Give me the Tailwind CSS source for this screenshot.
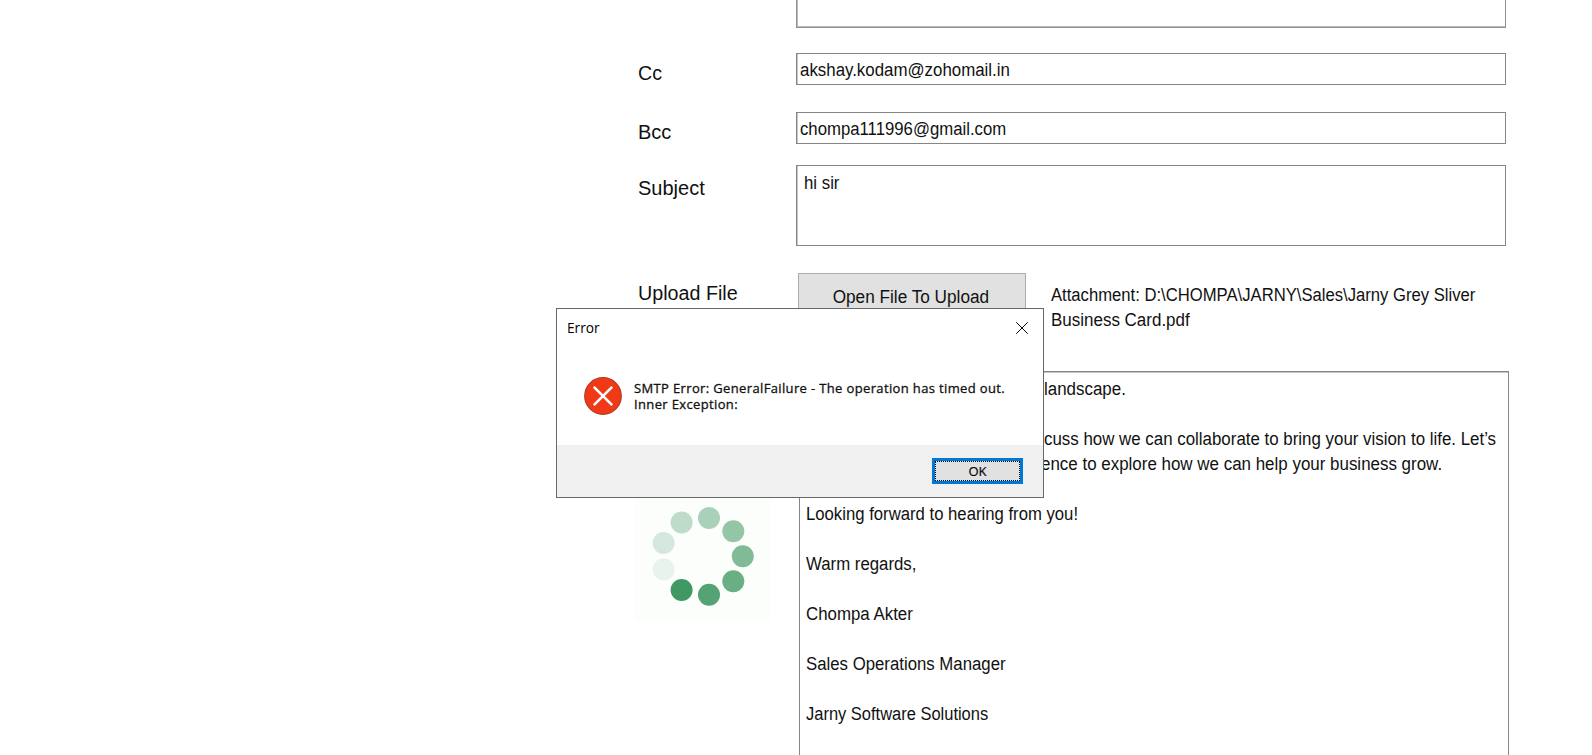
<!DOCTYPE html>
<html lang="en">
<head>
<meta charset="utf-8">
<title>Send Mail</title>
<script src="https://cdn.jsdelivr.net/npm/@tailwindcss/browser@4"></script>
</head>
<body class="relative h-[755px] w-[1592px] overflow-hidden bg-white font-['Liberation_Sans',Arial,sans-serif] text-[18px] leading-[25px] text-[#111]">
<main class="flex flex-col pl-[638px]">
  <div class="flex h-[28px]">
    <div class="ml-[158px] w-[710px] border border-t-0 border-[#919191] shadow-[inset_1px_-1px_0_#bbb]"></div>
  </div>
  <div class="mt-[25px] flex h-[32px]">
    <label class="w-[158px] pt-[8px] text-[20px]"><span class="inline-block origin-left scale-x-[0.98]">Cc</span></label>
    <div class="w-[710px] border border-[#868686] pt-[4px] pl-[3px] shadow-[inset_1px_0_0_#c4c4c4]"><span class="inline-block origin-left scale-x-[0.937] whitespace-nowrap">akshay.kodam@zohomail.in</span></div>
  </div>
  <div class="mt-[27px] flex h-[32px]">
    <label class="w-[158px] pt-[8px] text-[20px]"><span class="inline-block origin-left">Bcc</span></label>
    <div class="w-[710px] border border-[#868686] pt-[4px] pl-[3px] shadow-[inset_1px_0_0_#c4c4c4]"><span class="inline-block origin-left scale-x-[0.93] whitespace-nowrap">chompa111996@gmail.com</span></div>
  </div>
  <div class="mt-[21px] flex h-[81px]">
    <label class="w-[158px] pt-[11px] text-[20px]"><span class="inline-block origin-left">Subject</span></label>
    <div class="w-[710px] border border-[#868686] pt-[5px] pl-[7px] shadow-[inset_1px_0_0_#c4c4c4]"><span class="inline-block origin-left scale-x-[0.933] whitespace-nowrap">hi sir</span></div>
  </div>
  <div class="mt-[26px] flex h-[99px]">
    <label class="w-[160px] pt-[9px] text-[20px]"><span class="inline-block origin-left scale-x-[0.985] whitespace-nowrap">Upload File</span></label>
    <button class="mt-px flex h-[50px] w-[228px] justify-center border border-[#adadad] bg-[#e1e1e1] pt-[11px]"><span class="inline-block -translate-x-px scale-x-[0.955] whitespace-nowrap">Open File To Upload</span></button>
    <div class="ml-[25px] pt-[11px] whitespace-nowrap">
      <p class="origin-left scale-x-[0.925]">Attachment: D:\CHOMPA\JARNY\Sales\Jarny Grey Sliver</p>
      <p class="w-max origin-left scale-x-[0.943]">Business Card.pdf</p>
    </div>
  </div>
  <div class="flex h-[400px]">
    <div class="w-[161px] pt-[126px]">
      <div class="-ml-[4px] h-[125px] w-[136px] bg-[#fcfefc]">
        <svg class="block" width="136" height="125" viewBox="634 497 136 125">
          <circle cx="709" cy="518" r="11" fill="#a9d0b8"/>
          <circle cx="733.3" cy="531.3" r="11" fill="#94c5a7"/>
          <circle cx="742.8" cy="556.3" r="11" fill="#80ba96"/>
          <circle cx="733.3" cy="581.3" r="11" fill="#6aae84"/>
          <circle cx="709" cy="594.7" r="11" fill="#55a374"/>
          <circle cx="681.6" cy="590" r="11" fill="#409862"/>
          <circle cx="663.6" cy="569.5" r="11" fill="#e9f3ed"/>
          <circle cx="663.6" cy="543" r="11" fill="#d5e8dd"/>
          <circle cx="681.6" cy="522.5" r="11" fill="#bfdccb"/>
        </svg>
      </div>
    </div>
    <div class="w-[710px] border border-[#868686] pt-[5px] pl-[6px] shadow-[inset_0_1px_0_#c4c4c4]">
      <div class="pl-[238px] whitespace-nowrap">
        <p class="w-max origin-left scale-x-[0.94]">landscape.</p>
        <p class="mt-[25px] w-max origin-left scale-x-[0.938]">cuss how we can collaborate to bring your vision to life. Let’s</p>
        <p class="-ml-[3px] w-max origin-left scale-x-[0.941]">ence to explore how we can help your business grow.</p>
      </div>
      <div class="mt-[25px] flex flex-col items-start gap-[25px]">
        <p class="origin-left scale-x-[0.928]">Looking forward to hearing from you!</p>
        <p class="origin-left scale-x-[0.933]">Warm regards,</p>
        <p class="origin-left scale-x-[0.937]">Chompa Akter</p>
        <p class="origin-left scale-x-[0.932]">Sales Operations Manager</p>
        <p class="origin-left scale-x-[0.915]">Jarny Software Solutions</p>
      </div>
    </div>
  </div>
</main>

<section role="dialog" class="absolute top-[308px] left-[556px] flex h-[190px] w-[488px] flex-col border border-[#696969] bg-white font-['Open_Sans','Noto_Sans',sans-serif] text-[13px] leading-[16px] text-black">
  <header class="flex justify-between pt-[11px] pr-[15px] pl-[10px]">
    <h1 class="origin-left scale-x-[0.98] text-[14px]">Error</h1>
    <svg class="mt-[2px]" width="12" height="12" viewBox="0 0 12 12"><path d="M.3.3l11.4 11.4M11.7.3L.3 11.7" stroke="#000" stroke-width="1" fill="none"/></svg>
  </header>
  <div class="flex flex-1 pt-[41px] pl-[27px]">
    <svg width="38" height="38" viewBox="0 0 38 38"><circle cx="19" cy="19" r="18.3" fill="#f03a17" stroke="#b93a22" stroke-width="1.2"/><path d="M9.8 9.8l18.4 18.4M28.2 9.8L9.8 28.2" stroke="#fff" stroke-width="2.6" fill="none"/></svg>
    <p class="mt-[3px] ml-[12px] tracking-[0.36px] whitespace-nowrap text-[#111] [-webkit-text-stroke:0.3px_#111]">SMTP Error: GeneralFailure - The operation has timed out.<br>Inner Exception:</p>
  </div>
  <footer class="flex h-[52px] justify-end bg-[#f0f0f0] pt-[13px] pr-[20px]">
    <button class="h-[26px] w-[91px] border-[3px] border-[#0078d7] bg-[#e1e1e1]"><span class="flex h-full items-center justify-center border border-dotted border-black [-webkit-text-stroke:0.2px_#111]">OK</span></button>
  </footer>
</section>
</body>
</html>
